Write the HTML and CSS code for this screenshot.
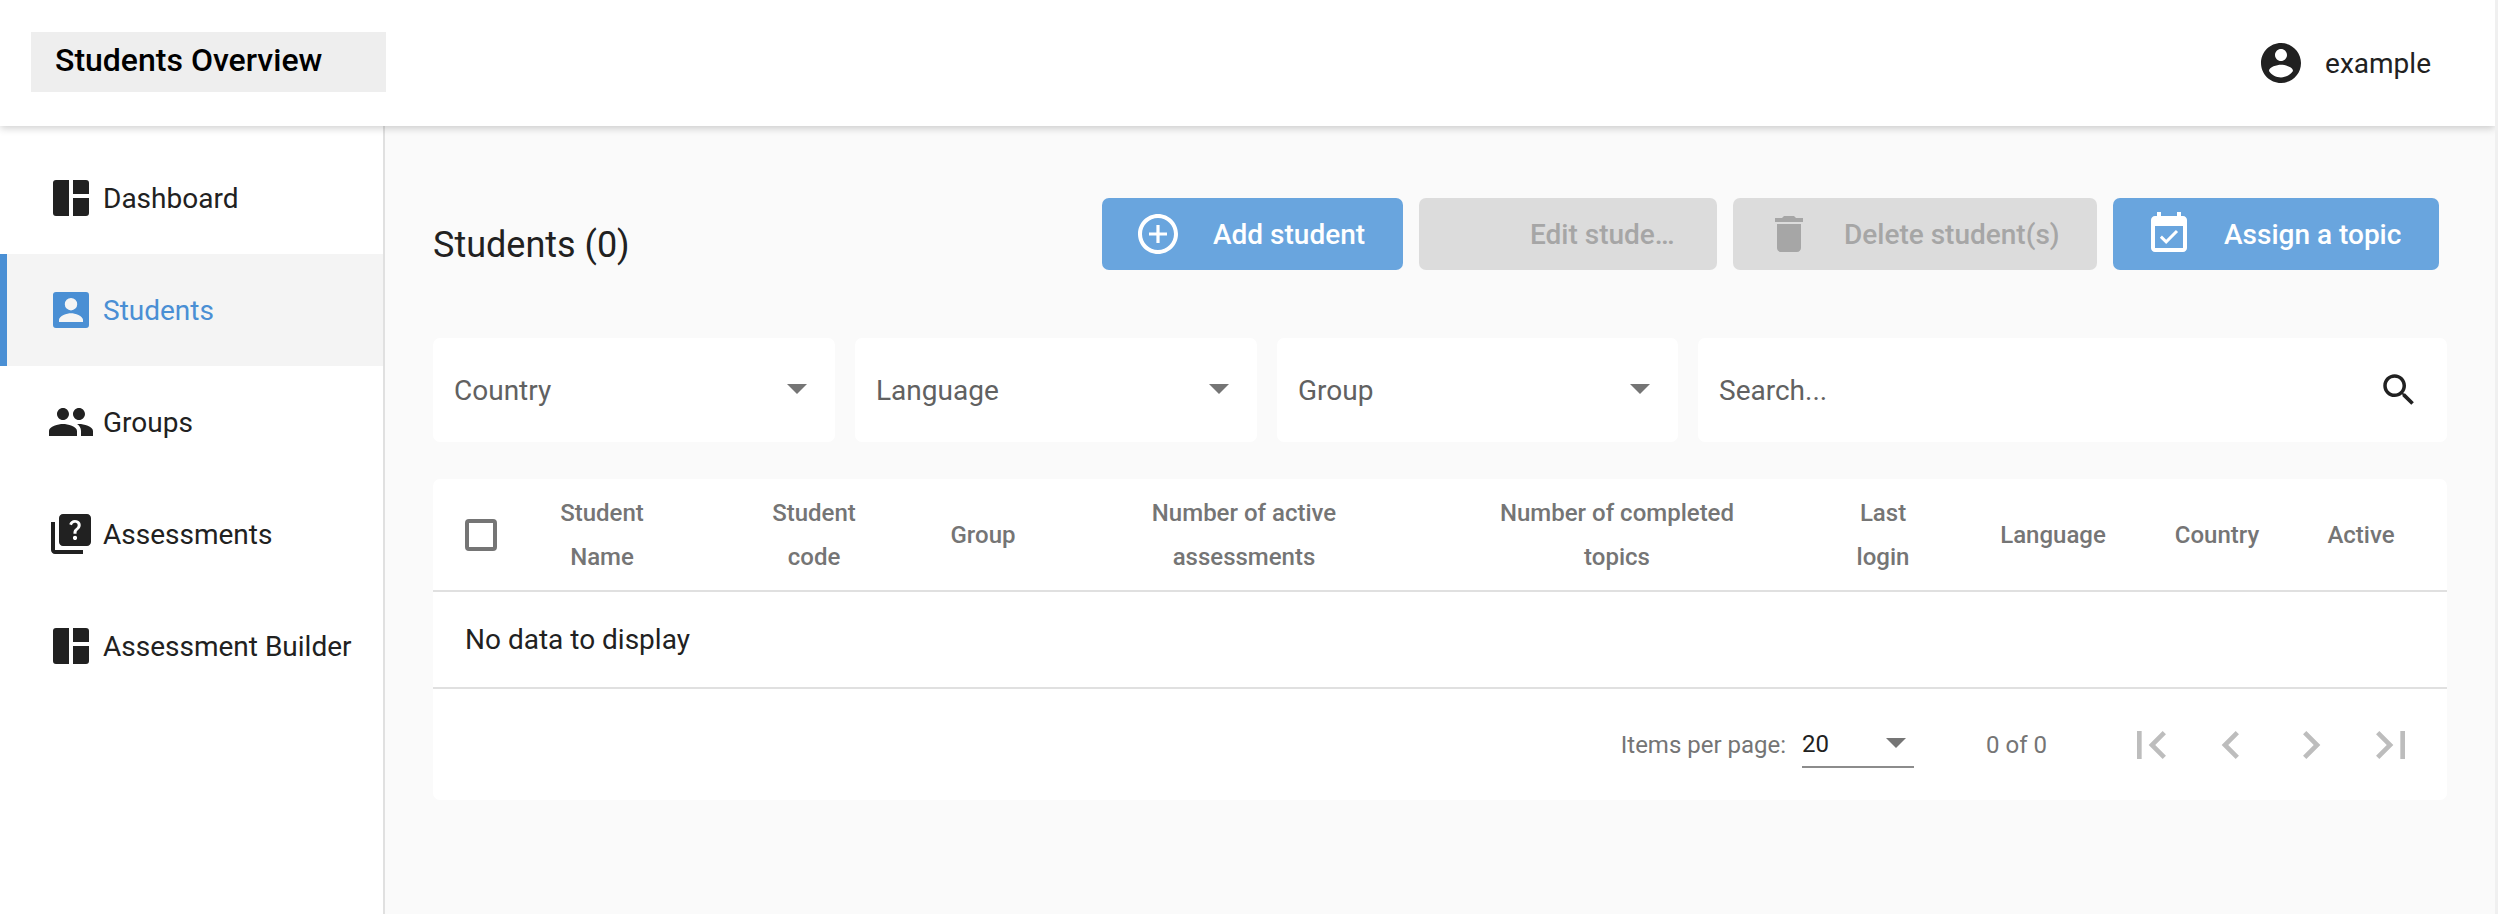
FILE: index.html
```html
<!DOCTYPE html>

<html lang="en">
    <head>
        <meta charset="utf-8">
        <title>Students Overview</title>
        <meta name="viewport" content="width=device-width, initial-scale=1">
        <link rel="stylesheet" href="styles.css">
    </head>

    <body>
        <div class="app">
            <header class="topbar">
                <div class="page-title">Students Overview</div>
                <div class="user">
                    <svg class="icon" viewBox="0 0 24 24"><path d="M12 2C6.48 2 2 6.48 2 12s4.48 10 10 10 10-4.48 10-10S17.52 2 12 2zm0 3c1.66 0 3 1.34 3 3s-1.34 3-3 3-3-1.34-3-3 1.34-3 3-3zm0 14.2c-2.5 0-4.71-1.28-6-3.22.03-1.99 4-3.08 6-3.08 1.99 0 5.97 1.09 6 3.08-1.29 1.94-3.5 3.22-6 3.22z"/></svg>
                    <span>example</span>
                </div>
            </header>

            <div class="body-row">
                <nav class="sidebar">
                    <a class="nav-item">
                        <svg class="icon" viewBox="0 0 24 24"><path d="M4.5 3H11v18H4.5A1.5 1.5 0 0 1 3 19.500V4.500A1.500 1.500 0 0 1 4.500 3zM13 3h6.500A1.500 1.500 0 0 1 21 4.500V10h-8zM13 12h8v7.500a1.500 1.500 0 0 1-1.500 1.500H13z"/></svg>
                        <span>Dashboard</span>
                    </a>
                    <a class="nav-item active">
                        <svg class="icon" viewBox="0 0 24 24"><path fill-rule="evenodd" d="M4.500 3h15A1.500 1.500 0 0 1 21 4.500v15a1.500 1.500 0 0 1-1.500 1.500h-15A1.500 1.500 0 0 1 3 19.500v-15A1.500 1.500 0 0 1 4.500 3zM12 6a3.100 3.100 0 1 0 0 6.200A3.100 3.100 0 0 0 12 6zM6 18h12v-1.100c0-2-4-3.300-6-3.300s-6 1.300-6 3.300z"/></svg>
                        <span>Students</span>
                    </a>
                    <a class="nav-item">
                        <svg class="icon" viewBox="0 0 24 24"><path d="M16 11c1.660 0 2.990-1.340 2.990-3S17.660 5 16 5c-1.660 0-3 1.340-3 3s1.340 3 3 3zm-8 0c1.660 0 2.990-1.340 2.990-3S9.660 5 8 5C6.340 5 5 6.340 5 8s1.340 3 3 3zm0 2c-2.330 0-7 1.170-7 3.500V19h14v-2.500c0-2.330-4.670-3.500-7-3.500zm8 0c-.29 0-.62.02-.97.05 1.160.84 1.970 1.970 1.970 3.450V19h6v-2.500c0-2.330-4.670-3.500-7-3.500z"/></svg>
                        <span>Groups</span>
                    </a>
                    <a class="nav-item">
                        <svg class="icon" viewBox="0 0 24 24"><path d="M4 6H2v14c0 1.100.9 2 2 2h14v-2H4V6zm16-4H8c-1.100 0-2 .9-2 2v12c0 1.100.9 2 2 2h12c1.100 0 2-.9 2-2V4c0-1.100-.9-2-2-2zm-5.990 13c-.59 0-1.050-.47-1.050-1.050 0-.59.47-1.040 1.050-1.040.59 0 1.040.45 1.040 1.040-.01.58-.45 1.050-1.040 1.050zm2.500-6.170c-.63.93-1.230 1.210-1.560 1.810-.13.24-.18.4-.18 1.180h-1.520c0-.41-.06-1.080.26-1.650.41-.73 1.180-1.160 1.630-1.800.48-.68.21-1.940-1.140-1.940-.88 0-1.320.67-1.500 1.230l-1.370-.57C11.510 5.960 12.520 5 13.990 5c1.230 0 2.080.56 2.510 1.260.37.61.58 1.730.01 2.570z"/></svg>
                        <span>Assessments</span>
                    </a>
                    <a class="nav-item">
                        <svg class="icon" viewBox="0 0 24 24"><path d="M4.500 3H11v18H4.500A1.500 1.500 0 0 1 3 19.500V4.500A1.500 1.500 0 0 1 4.500 3zM13 3h6.500A1.500 1.500 0 0 1 21 4.500V10h-8zM13 12h8v7.500a1.500 1.500 0 0 1-1.500 1.500H13z"/></svg>
                        <span>Assessment Builder</span>
                    </a>
                </nav>

                <main class="content">
                    <div class="toolbar">
                        <h2>Students (0)</h2>
                        <div class="actions">
                            <button class="btn btn-add">
                                <svg class="icon" viewBox="0 0 24 24"><path d="M12.800 7.500h-1.600v3.700H7.500v1.600h3.700v3.700h1.600v-3.700h3.700v-1.600h-3.700V7.500zM12 2C6.480 2 2 6.480 2 12s4.480 10 10 10 10-4.480 10-10S17.520 2 12 2zm0 18c-4.410 0-8-3.590-8-8s3.590-8 8-8 8 3.590 8 8-3.590 8-8 8z"/></svg>
                                <span class="btn-text">Add student</span>
                            </button>
                            <button class="btn btn-edit" disabled>
                                <span class="icon"></span>
                                <span class="btn-text">Edit student</span>
                            </button>
                            <button class="btn btn-delete" disabled>
                                <svg class="icon" viewBox="0 0 24 24"><path d="M6 19c0 1.100.9 2 2 2h8c1.100 0 2-.9 2-2V7H6v12zM19 4h-3.500l-1-1h-5l-1 1H5v2h14V4z"/></svg>
                                <span class="btn-text">Delete student(s)</span>
                            </button>
                            <button class="btn btn-assign">
                                <svg class="icon" viewBox="0 0 24 24"><path d="M16.530 11.060L15.470 10l-4.880 4.880-2.120-2.120-1.060 1.060L10.590 17l5.940-5.940zM19 3h-1V1h-2v2H8V1H6v2H5c-1.110 0-1.990.9-1.990 2L3 19c0 1.100.89 2 2 2h14c1.100 0 2-.9 2-2V5c0-1.100-.9-2-2-2zm0 16H5V8h14v11z"/></svg>
                                <span class="btn-text">Assign a topic</span>
                            </button>
                        </div>
                    </div>

                    <div class="filters">
                        <div class="filter"><span>Country</span><i class="caret"></i></div>
                        <div class="filter"><span>Language</span><i class="caret"></i></div>
                        <div class="filter"><span>Group</span><i class="caret"></i></div>
                        <div class="filter filter-search">
                            <span>Search...</span>
                            <svg class="search-icon" viewBox="0 0 24 24"><path d="M15.500 14h-.79l-.28-.27C15.410 12.590 16 11.110 16 9.500 16 5.910 13.090 3 9.500 3S3 5.910 3 9.500 5.910 16 9.500 16c1.610 0 3.090-.59 4.230-1.570l.27.28v.79l5 4.990L20.490 19l-4.990-5zm-6 0C7.010 14 5 11.990 5 9.500S7.010 5 9.500 5 14 7.010 14 9.500 11.990 14 9.500 14z"/></svg>
                        </div>
                    </div>

                    <div class="table-card">
                        <table>
                            <colgroup>
                                <col class="col-check">
                                <col class="col-name">
                                <col class="col-code">
                                <col class="col-group">
                                <col class="col-active-count">
                                <col class="col-completed">
                                <col class="col-login">
                                <col class="col-lang">
                                <col class="col-country">
                                <col class="col-active">
                            </colgroup>
                            <thead>
                                <tr>
                                    <th class="check-cell"><span class="checkbox"></span></th>
                                    <th>Student<br>Name</th>
                                    <th>Student<br>code</th>
                                    <th>Group</th>
                                    <th>Number of active<br>assessments</th>
                                    <th>Number of completed<br>topics</th>
                                    <th>Last<br>login</th>
                                    <th>Language</th>
                                    <th>Country</th>
                                    <th class="last-cell">Active</th>
                                </tr>
                            </thead>
                            <tbody>
                                <tr>
                                    <td colspan="10" class="empty">No data to display</td>
                                </tr>
                            </tbody>
                        </table>

                        <div class="pager">
                            <span class="pager-label">Items per page:</span>
                            <div class="page-size"><span>20</span><i class="caret"></i></div>
                            <span class="pager-range">0 of 0</span>
                            <div class="pager-btns">
                                <svg viewBox="0 0 24 24"><path d="M18.410 16.590L13.820 12l4.590-4.590L17 6l-6 6 6 6zM6 6h2v12H6z"/></svg>
                                <svg viewBox="0 0 24 24"><path d="M15.410 7.410L14 6l-6 6 6 6 1.410-1.410L10.830 12z"/></svg>
                                <svg viewBox="0 0 24 24"><path d="M10 6L8.590 7.410 13.170 12l-4.580 4.590L10 18l6-6z"/></svg>
                                <svg viewBox="0 0 24 24"><path d="M5.590 7.410L10.180 12l-4.590 4.590L7 18l6-6-6-6zM16 6h2v12h-2z"/></svg>
                            </div>
                        </div>
                    </div>
                </main>
            </div>
        </div>
    </body>
</html>
```

FILE: styles.css
```css
* {
    box-sizing: border-box;
}

body {
    font-family: Roboto, "Liberation Sans", sans-serif;
    background-color: #f0f0f0;
    margin: 0;
    padding: 0;
    color: #212121;
}

.app {
    width: 2495px;
    height: 914px;
    display: flex;
    flex-direction: column;
    background-color: #fafafa;
    overflow: hidden;
}

.icon {
    display: block;
    width: 48px;
    height: 48px;
    flex: none;
    fill: currentColor;
}

/* top bar */
.topbar {
    position: relative;
    z-index: 2;
    height: 126px;
    flex: none;
    display: flex;
    justify-content: space-between;
    background-color: #fff;
    box-shadow: 0 2px 8px rgba(0, 0, 0, 0.2);
    padding: 32px 64px 0 31px;
}

.page-title {
    width: 355px;
    height: 60px;
    padding-left: 24px;
    background-color: #eee;
    color: #000;
    font-size: 32px;
    font-weight: 500;
    line-height: 56px;
}

.user {
    display: flex;
    align-items: center;
    gap: 20px;
    height: 62px;
    font-size: 28px;
}

/* sidebar */
.body-row {
    flex: 1;
    display: flex;
    min-height: 0;
}

.sidebar {
    width: 385px;
    flex: none;
    padding-top: 16px;
    background-color: #fff;
    border-right: 2px solid #e0e0e0;
}

.nav-item {
    height: 112px;
    display: flex;
    align-items: center;
    gap: 8px;
    padding-left: 47px;
    font-size: 28px;
    color: #212121;
}

.nav-item.active {
    padding-left: 40px;
    border-left: 7px solid #4a8fd4;
    background-color: #f4f4f4;
    color: #4a8fd4;
}

/* main */
.content {
    flex: 1;
    padding: 72px 48px 0;
    min-width: 0;
}

.toolbar {
    display: flex;
    justify-content: space-between;
    align-items: flex-start;
    padding-right: 8px;
}

.toolbar h2 {
    margin: 22px 0 0;
    font-size: 36px;
    font-weight: 400;
    line-height: 50px;
    color: #212121;
}

.actions {
    display: flex;
    gap: 16px;
}

.btn {
    height: 72px;
    display: flex;
    align-items: center;
    gap: 31px;
    padding: 0 20px 0 32px;
    border: none;
    border-radius: 7px;
    background-color: #69a5de;
    color: #fff;
    font-family: inherit;
    font-size: 28px;
    font-weight: 500;
    white-space: nowrap;
}

.btn:disabled {
    background-color: #dcdcdc;
    color: #a6a6a6;
}

.btn-add {
    width: 301px;
}

.btn-edit {
    width: 298px;
    padding-right: 40px;
}

.btn-delete {
    width: 364px;
}

.btn-assign {
    width: 326px;
}

.btn-text {
    min-width: 0;
    overflow: hidden;
    text-overflow: ellipsis;
}

.filters {
    display: grid;
    grid-template-columns: 402px 402px 401px 1fr;
    gap: 20px;
    margin-top: 68px;
}

.filter {
    height: 104px;
    display: flex;
    align-items: center;
    justify-content: space-between;
    padding: 0 28px 0 21px;
    background-color: #fff;
    border-radius: 7px;
    font-size: 28px;
    color: #616161;
}

.search-icon {
    width: 42px;
    height: 42px;
    margin-right: -1px;
    fill: #212121;
}

.caret {
    display: block;
    width: 0;
    height: 0;
    margin-top: -2px;
    border-left: 10px solid transparent;
    border-right: 10px solid transparent;
    border-top: 10px solid #757575;
}

/* table */
.table-card {
    margin-top: 37px;
    background-color: #fff;
    border-radius: 7px;
}

table {
    width: 100%;
    table-layout: fixed;
    border-collapse: collapse;
}

.col-check { width: 67px; }
.col-name { width: 204px; }
.col-code { width: 220px; }
.col-group { width: 118px; }
.col-active-count { width: 404px; }
.col-completed { width: 342px; }
.col-login { width: 190px; }
.col-lang { width: 150px; }
.col-country { width: 178px; }
.col-active { width: 141px; }

th {
    height: 112px;
    padding: 0;
    border-bottom: 2px solid #e0e0e0;
    font-size: 24px;
    font-weight: 500;
    line-height: 44px;
    color: #757575;
    text-align: center;
}

.check-cell {
    padding-left: 32px;
}

.last-cell {
    padding-right: 31px;
}

.checkbox {
    display: block;
    width: 32px;
    height: 32px;
    border: 4px solid #757575;
    border-radius: 4px;
}

.empty {
    height: 97px;
    padding: 0 0 0 32px;
    border-bottom: 2px solid #e0e0e0;
    font-size: 28px;
    color: #212121;
}

.pager {
    height: 111px;
    display: flex;
    align-items: center;
    justify-content: flex-end;
    padding-right: 28px;
    font-size: 24px;
    color: #757575;
}

.page-size {
    width: 112px;
    height: 46px;
    margin-left: 16px;
    padding-right: 8px;
    display: flex;
    align-items: center;
    justify-content: space-between;
    border-bottom: 2px solid #8c8c8c;
    color: #212121;
}

.pager-range {
    margin-left: 72px;
}

.pager-btns {
    display: flex;
    gap: 24px;
    margin-left: 76px;
}

.pager-btns svg {
    display: block;
    width: 56px;
    height: 56px;
    fill: #bdbdbd;
}
```
